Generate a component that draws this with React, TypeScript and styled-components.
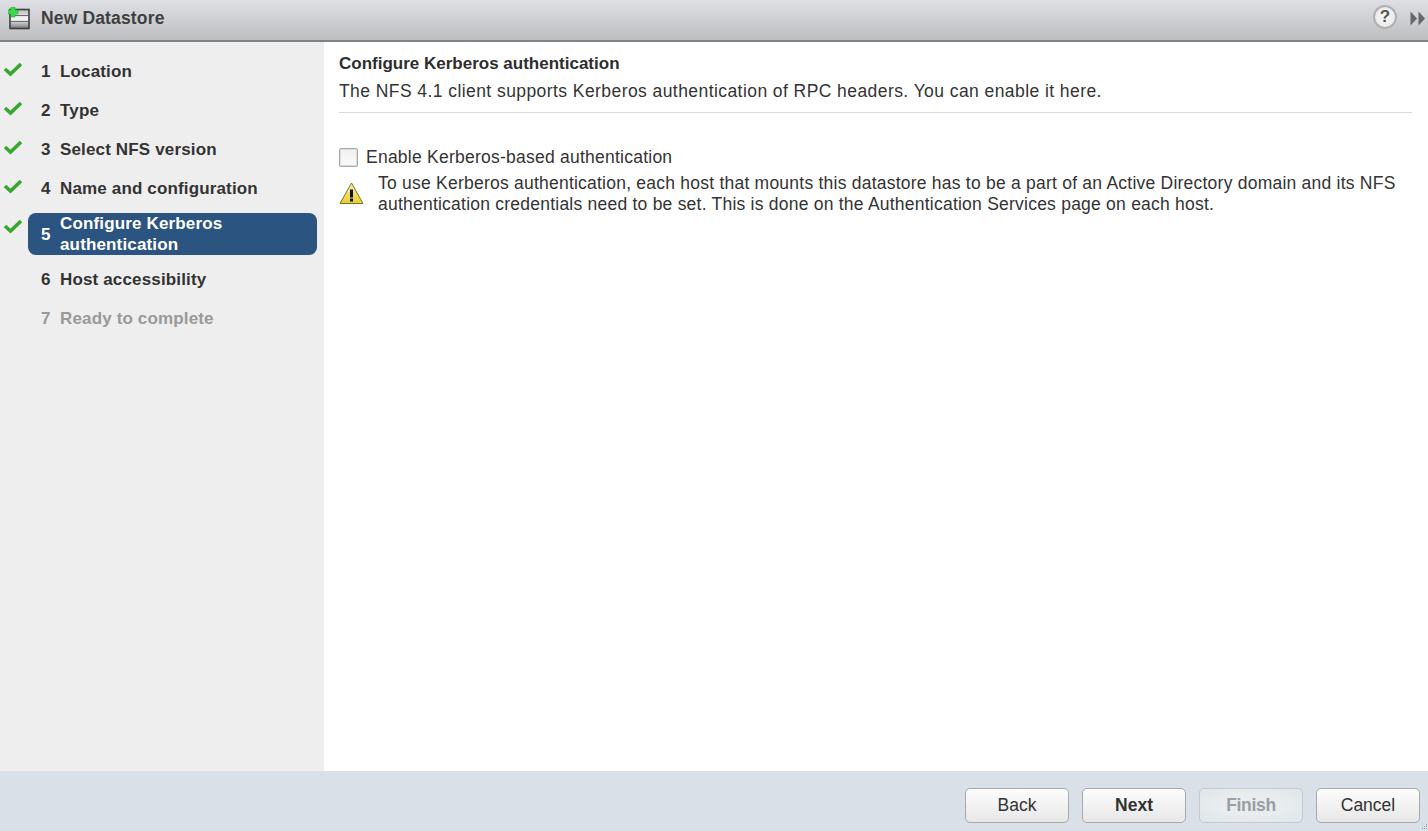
import React from "react";
import styled, { createGlobalStyle } from "styled-components";

const GlobalStyle = createGlobalStyle`
  html, body {
    margin: 0;
    padding: 0;
    height: 100%;
    background: #fff;
    overflow: hidden;
  }
  #root {
    height: 100%;
  }
`;

const Page = styled.div`
  width: 1428px;
  height: 831px;
  display: flex;
  flex-direction: column;
  font-family: "Liberation Sans", Arial, sans-serif;
  color: #333;
`;

const TitleBar = styled.header`
  height: 42px;
  flex: none;
  box-sizing: border-box;
  display: flex;
  align-items: center;
  padding: 0 2px 4px 8px;
  background: linear-gradient(#dfe0e4, #bdbec0);
  border-bottom: 2px solid #808285;
`;

const TitleText = styled.h1`
  margin: 0 0 0 10px;
  font-size: 17.5px;
  letter-spacing: 0.15px;
  font-weight: bold;
  color: #3f3f3f;
  flex: 1;
`;

const HelpButton = styled.div`
  width: 24px;
  height: 24px;
  box-sizing: border-box;
  border-radius: 50%;
  border: 2px solid #b0b0b0;
  background: radial-gradient(#fafafa, #e4e4e4);
  color: #555;
  font-size: 17px;
  font-weight: bold;
  display: flex;
  align-items: center;
  justify-content: center;
  margin: 0 13px 2px 0;
`;

const Body = styled.div`
  flex: 1;
  display: flex;
  min-height: 0;
`;

const Sidebar = styled.nav`
  width: 324px;
  flex: none;
  box-sizing: border-box;
  background: #eeeeee;
  padding: 10px 7px 0 0;
  display: flex;
  flex-direction: column;
`;

const Step = styled.div<{ $active?: boolean; $disabled?: boolean }>`
  display: grid;
  grid-template-columns: 28px 1fr;
  align-items: ${(p) => (p.$active ? "start" : "center")};
  margin: ${(p) => (p.$active ? "5px 0" : "0")};
  height: ${(p) => (p.$active ? "42px" : "39px")};
  font-size: 17px;
  font-weight: bold;
  letter-spacing: 0.15px;
  color: ${(p) => (p.$disabled ? "#999" : "#333")};
`;

const CheckSlot = styled.div<{ $active?: boolean }>`
  padding-left: 3px;
  height: 18px;
  margin-top: ${(p) => (p.$active ? "5px" : "-3px")};
`;

const StepLabel = styled.div<{ $active?: boolean }>`
  display: grid;
  grid-template-columns: 32px 1fr;
  align-items: center;
  height: ${(p) => (p.$active ? "42px" : "auto")};
  line-height: ${(p) => (p.$active ? "21px" : "20px")};
  border-radius: 8px;
  background: ${(p) => (p.$active ? "#2b5480" : "transparent")};
  color: ${(p) => (p.$active ? "#fff" : "inherit")};
`;

const StepNum = styled.span`
  padding-left: 13px;
`;

const Content = styled.main`
  flex: 1;
  min-width: 0;
  padding: 0 16px 0 15px;
`;

const Heading = styled.div`
  height: 71px;
  box-sizing: border-box;
  padding-top: 12px;
  border-bottom: 1px solid #d9d9d9;
`;

const HeadingTitle = styled.div`
  font-size: 17px;
  font-weight: bold;
  line-height: 19px;
  color: #2e2e2e;
`;

const HeadingSub = styled.div`
  font-size: 17.5px;
  letter-spacing: 0.43px;
  line-height: 19px;
  margin-top: 9px;
  color: #333;
`;

const CheckRow = styled.label`
  display: flex;
  align-items: center;
  margin-top: 34px;
  font-size: 17.5px;
  letter-spacing: 0.24px;
  line-height: 20px;
  color: #333;
`;

const CheckBox = styled.span`
  width: 19px;
  height: 19px;
  box-sizing: border-box;
  border: 1px solid #a9a9a9;
  box-shadow: inset 0 0 0 1px #dcdcdc;
  border-radius: 2px;
  background: linear-gradient(#f0f0f0, #fafafa);
  margin-right: 8px;
`;

const WarningRow = styled.div`
  display: flex;
  align-items: flex-start;
  margin-top: 6px;
`;

const WarningIconSlot = styled.div`
  width: 39px;
  flex: none;
  padding-top: 9px;
`;

const WarningText = styled.div`
  font-size: 17.5px;
  letter-spacing: 0.23px;
  line-height: 21px;
  color: #333;
  width: 1034px;
`;

const Footer = styled.footer`
  height: 60px;
  flex: none;
  box-sizing: border-box;
  position: relative;
  background: #dae0e8;
  display: flex;
  justify-content: flex-end;
  align-items: flex-start;
  gap: 13px;
  padding: 17px 8px 0 0;
`;

const Button = styled.button<{ $primary?: boolean; $disabled?: boolean }>`
  width: 104px;
  height: 35px;
  box-sizing: border-box;
  padding: 0;
  border: 1px solid ${(p) => (p.$disabled ? "#c5cacf" : "#a8a8a8")};
  border-radius: 5px;
  background: ${(p) =>
    p.$disabled
      ? "radial-gradient(ellipse at center, #e9edf0 40%, #dfe5e9)"
      : "linear-gradient(#fdfdfd, #e7e7e7)"};
  font-family: inherit;
  font-size: 17.5px;
  letter-spacing: ${(p) => (p.$disabled ? "-0.3px" : "0")};
  font-weight: ${(p) => (p.$primary || p.$disabled ? "bold" : "normal")};
  color: ${(p) => (p.$disabled ? "#999fa3" : "#333")};
`;

// resize grip in the bottom right corner of the dialog
const Grip = styled.div`
  position: absolute;
  right: 0;
  bottom: 0;
  width: 8px;
  height: 8px;
  line-height: 0;
`;

const ForwardIcon = () => (
  <svg width="16" height="15" viewBox="0 0 16 15">
    <path d="M0.500 0.500l6.500 7-6.500 7z" fill="#66676a" />
    <path d="M8.500 0.500l6.500 7-6.500 7z" fill="#66676a" />
  </svg>
);

const DatastoreIcon = () => (
  <svg width="23" height="23" viewBox="0 0 23 23" style={{ flex: "none" }}>
    <defs>
      <linearGradient id="body" x1="0" y1="0" x2="0" y2="1">
        <stop offset="0" stopColor="#b9b9b9" />
        <stop offset="0.5" stopColor="#f8f8f8" />
        <stop offset="1" stopColor="#777" />
      </linearGradient>
    </defs>
    <rect x="2" y="2.500" width="19" height="19" fill="url(#body)" stroke="#3f3f3f" strokeWidth="1.600" />
    <path d="M3 8.500h17M3 14.500h17" stroke="#6a6a6a" />
    <path
      d="M3 0h4v3h3v4H7v3H3V7H0V3h3z"
      fill="#35e04a"
      stroke="#2aa83a"
      strokeWidth="0.6"
    />
  </svg>
);

const CheckIcon = () => (
  <svg width="20" height="16" viewBox="0 0 20 16" style={{ display: "block" }}>
    <path d="M2 8l5.500 5L18 3" fill="none" stroke="#37a82f" strokeWidth="3.600" />
  </svg>
);

const WarningIcon = () => (
  <svg width="25" height="23" viewBox="0 0 25 23">
    <defs>
      <linearGradient id="warn" x1="0" y1="0" x2="0" y2="1">
        <stop offset="0" stopColor="#fbf29a" />
        <stop offset="1" stopColor="#e5cf2c" />
      </linearGradient>
    </defs>
    <path
      d="M12.500 1 L24 21.500 H1 Z"
      fill="url(#warn)"
      stroke="#7d7436"
      strokeLinejoin="round"
    />
    <rect x="11" y="7.500" width="3" height="8" fill="#111" />
    <rect x="11" y="16.500" width="3" height="3" fill="#111" />
  </svg>
);

const GripIcon = () => (
  <svg width="8" height="8" viewBox="0 0 8 8">
    <path d="M6 1h1v1H6zM4 3h1v1H4zM6 3h1v1H6zM2 5h1v1H2zM4 5h1v1H4zM6 5h1v1H6z" fill="#9aa0a6" />
  </svg>
);

const steps = [
  { n: 1, label: "Location", done: true },
  { n: 2, label: "Type", done: true },
  { n: 3, label: "Select NFS version", done: true },
  { n: 4, label: "Name and configuration", done: true },
  { n: 5, label: "Configure Kerberos authentication", done: true, active: true },
  { n: 6, label: "Host accessibility" },
  { n: 7, label: "Ready to complete", disabled: true },
];

export default function App() {
  return (
    <Page>
      <GlobalStyle />
      <TitleBar>
        <DatastoreIcon />
        <TitleText>New Datastore</TitleText>
        <HelpButton>?</HelpButton>
        <ForwardIcon />
      </TitleBar>
      <Body>
        <Sidebar>
          {steps.map((s) => (
            <Step key={s.n} $active={s.active} $disabled={s.disabled}>
              <CheckSlot $active={s.active}>{s.done && <CheckIcon />}</CheckSlot>
              <StepLabel $active={s.active}>
                <StepNum>{s.n}</StepNum>
                <span>{s.label}</span>
              </StepLabel>
            </Step>
          ))}
        </Sidebar>
        <Content>
          <Heading>
            <HeadingTitle>Configure Kerberos authentication</HeadingTitle>
            <HeadingSub>
              The NFS 4.1 client supports Kerberos authentication of RPC headers. You can enable it here.
            </HeadingSub>
          </Heading>
          <CheckRow>
            <CheckBox />
            Enable Kerberos-based authentication
          </CheckRow>
          <WarningRow>
            <WarningIconSlot>
              <WarningIcon />
            </WarningIconSlot>
            <WarningText>
              To use Kerberos authentication, each host that mounts this datastore has to be a part of an Active Directory domain and its NFS authentication credentials need to be set. This is done on the Authentication Services page on each host.
            </WarningText>
          </WarningRow>
        </Content>
      </Body>
      <Footer>
        <Button>Back</Button>
        <Button $primary>Next</Button>
        <Button $disabled>Finish</Button>
        <Button>Cancel</Button>
        <Grip>
          <GripIcon />
        </Grip>
      </Footer>
    </Page>
  );
}
